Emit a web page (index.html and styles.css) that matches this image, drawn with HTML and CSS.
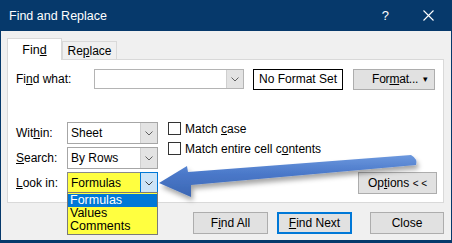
FILE: index.html
```html
<!DOCTYPE html>
<html lang="en">
<head>
  <meta charset="UTF-8">
  <title>Find and Replace</title>
  <link rel="stylesheet" href="styles.css">
</head>
<body>
  <div class="window">
    <div class="titlebar">
      <span class="title">Find and Replace</span>
      <span class="help">?</span>
      <svg class="close-x" width="11" height="11" viewBox="0 0 11 11">
        <path d="M0.5 0.5 L10.5 10.5 M10.5 0.5 L0.5 10.5" stroke="#fff" stroke-width="1.1" fill="none"/>
      </svg>
    </div>

    <div class="dialog">
      <div class="tabs">
        <div class="tab active"><span>Fin<u>d</u></span></div>
        <div class="tab"><span>Re<u>p</u>lace</span></div>
      </div>

      <div class="panel">
        <div class="find-row">
          <span class="lbl-find">Fi<u>n</u>d what:</span>
          <div class="combo combo-find">
            <span class="combo-text"></span>
            <span class="combo-btn"><svg width="8" height="5" viewBox="0 0 8 5"><path d="M0.5 0.5 L4 4 L7.5 0.5" stroke="#606060" fill="none"/></svg></span>
          </div>
          <div class="no-format">No Format Set</div>
          <div class="btn btn-format"><span>For<u>m</u>at...</span><span class="caret">&#9662;</span></div>
        </div>

        <div class="options-area">
          <div class="opt-grid">
            <span class="lbl">Wit<u>h</u>in:</span>
            <div class="combo">
              <span class="combo-text">Sheet</span>
              <span class="combo-btn"><svg width="8" height="5" viewBox="0 0 8 5"><path d="M0.5 0.5 L4 4 L7.5 0.5" stroke="#606060" fill="none"/></svg></span>
            </div>
            <span class="lbl"><u>S</u>earch:</span>
            <div class="combo">
              <span class="combo-text">By Rows</span>
              <span class="combo-btn"><svg width="8" height="5" viewBox="0 0 8 5"><path d="M0.5 0.5 L4 4 L7.5 0.5" stroke="#606060" fill="none"/></svg></span>
            </div>
            <span class="lbl"><u>L</u>ook in:</span>
            <div class="combo combo-look">
              <span class="combo-text">Formulas</span>
              <span class="combo-btn"><svg width="8" height="5" viewBox="0 0 8 5"><path d="M0.5 0.5 L4 4 L7.5 0.5" stroke="#404040" fill="none"/></svg></span>
              <ul class="droplist">
                <li class="selected">Formulas</li>
                <li>Values</li>
                <li>Comments</li>
              </ul>
            </div>
          </div>

          <div class="checks">
            <div class="check"><span class="box"></span><span>Match <u>c</u>ase</span></div>
            <div class="check"><span class="box"></span><span>Match entire cell c<u>o</u>ntents</span></div>
          </div>

          <div class="btn btn-options"><span>Op<u>t</u>ions <span class="chev">&lt; &lt;</span></span></div>
        </div>
      </div>

      <div class="actions">
        <div class="btn btn-action"><span>F<u>i</u>nd All</span></div>
        <div class="btn btn-action default"><span><u>F</u>ind Next</span></div>
        <div class="btn btn-action btn-close">Close</div>
      </div>
    </div>

    <!-- callout arrow drawn over the dialog -->
    <svg class="arrow" width="452" height="243" viewBox="0 0 452 243">
      <defs>
        <linearGradient id="arrowFill" x1="0" y1="0" x2="0" y2="1">
          <stop offset="0" stop-color="#6c98de"/>
          <stop offset="0.45" stop-color="#4a78c9"/>
          <stop offset="1" stop-color="#3b66b3"/>
        </linearGradient>
        <filter id="arrowShadow" x="-10%" y="-50%" width="120%" height="200%">
          <feDropShadow dx="2" dy="4" stdDeviation="2.5" flood-color="#000" flood-opacity="0.35"/>
        </filter>
      </defs>
      <path d="M159 183 L187 166 L188 172 L411 155 Q418 159 416 165 L191 185 L191 197 Z"
            fill="url(#arrowFill)" filter="url(#arrowShadow)"/>
    </svg>
  </div>
</body>
</html>
```

FILE: styles.css
```css
body {
  margin: 0;
  font-family: "Liberation Sans", Arial, sans-serif;
  font-size: 12px;
  color: #000;
  background: #f0f0f0;
}

u {
  text-decoration: underline;
  text-underline-offset: 1px;
}

.window {
  position: relative;
  width: 452px;
  height: 243px;
  box-sizing: border-box;
  border: 1px solid #06396b;
  border-top: none;
  border-bottom-width: 3px;
  background: #f0f0f0;
  overflow: hidden;
}

.titlebar {
  display: flex;
  align-items: center;
  height: 31px;
  background: #06396b;
  color: #fff;
  padding-left: 8px;
}

.title {
  font-size: 12.5px;
  flex: 1;
}

.help {
  font-size: 13px;
  margin-right: 34px;
}

.close-x {
  margin-right: 17px;
}

.dialog {
  padding: 0 7px 0 6px;
}

/* tabs */
.tabs {
  display: flex;
  align-items: flex-end;
  height: 21px;
  margin-top: 7px;
}

.tab {
  box-sizing: border-box;
  height: 18px;
  width: 55px;
  border: 1px solid #d9d9d9;
  border-bottom: none;
  display: flex;
  align-items: center;
  justify-content: center;
  background: #f0f0f0;
}

.tab.active {
  position: relative;
  z-index: 1;
  height: 22px;
  margin-bottom: -1px;
  background: #fff;
  font-size: 12.5px;
}

/* tab panel */
.panel {
  box-sizing: border-box;
  height: 144px;
  background: #fff;
  border: 1px solid #d9d9d9;
  padding: 9px 6px 0 8px;
}

.find-row {
  display: flex;
  align-items: center;
  height: 20px;
}

.lbl-find {
  width: 78px;
}

.combo {
  position: relative;
  box-sizing: border-box;
  display: flex;
  height: 22px;
  border: 1px solid #a6a6a6;
  background: #fff;
}

.combo-text {
  flex: 1;
  display: flex;
  align-items: center;
  padding-left: 3px;
}

.combo-btn {
  width: 16px;
  display: flex;
  align-items: center;
  justify-content: center;
  background: #e3e3e3;
  border-left: 1px solid #cfcfcf;
}

.combo-find {
  width: 150px;
  height: 20px;
  border-color: #b4b4b4;
}

.no-format {
  box-sizing: border-box;
  width: 90px;
  height: 21px;
  margin-left: 9px;
  border: 1px solid #000;
  display: flex;
  align-items: center;
  justify-content: center;
}

.btn {
  box-sizing: border-box;
  height: 22px;
  display: flex;
  align-items: center;
  justify-content: center;
  background: #e1e1e1;
  border: 1px solid #adadad;
}

.btn-format {
  width: 82px;
  height: 21px;
  justify-content: space-between;
  margin-left: 10px;
  padding: 0 6px 0 18px;
  letter-spacing: -0.2px;
}

.caret {
  font-size: 9px;
}

.chev {
  font-size: 10px;
}

/* within / search / look in */
.options-area {
  display: flex;
  margin-top: 33px;
}

.opt-grid {
  display: grid;
  grid-template-columns: 51px 91px;
  row-gap: 3px;
  align-items: center;
}

.combo-look {
  background: #ffff40;
  border-color: #8a8a8a;
}

.combo-look .combo-btn {
  background: #cce4f7;
  border: 1px solid #0078d7;
  margin: -1px -1px -1px 0;
}

.droplist {
  position: absolute;
  top: 19px;
  left: -1px;
  width: 91px;
  box-sizing: border-box;
  margin: 0;
  padding: 1px 0;
  list-style: none;
  background: #ffff40;
  border: 1px solid #7a7a7a;
  z-index: 2;
}

.droplist li {
  height: 13px;
  line-height: 13px;
  padding-left: 2px;
  font-size: 12.5px;
}

.droplist li.selected {
  background: #0078d7;
  color: #fff;
}

.checks {
  margin-left: 10px;
  display: flex;
  flex-direction: column;
  gap: 7px;
}

.check {
  display: flex;
  align-items: center;
  height: 13px;
}

.box {
  box-sizing: border-box;
  width: 13px;
  height: 13px;
  border: 1px solid #333;
  margin-right: 4px;
  background: #fff;
}

.btn-options {
  width: 79px;
  margin-left: auto;
  align-self: flex-end;
}

/* bottom buttons */
.actions {
  display: flex;
  justify-content: flex-end;
  margin-top: 9px;
}

.btn-action {
  width: 75px;
  margin-left: 9px;
}

.btn-action.default {
  border: 2px solid #0078d7;
}

.btn-close {
  width: 74px;
  margin-left: 18px;
}

.arrow {
  position: absolute;
  left: -1px;
  top: 0;
  pointer-events: none;
  z-index: 5;
}
```
